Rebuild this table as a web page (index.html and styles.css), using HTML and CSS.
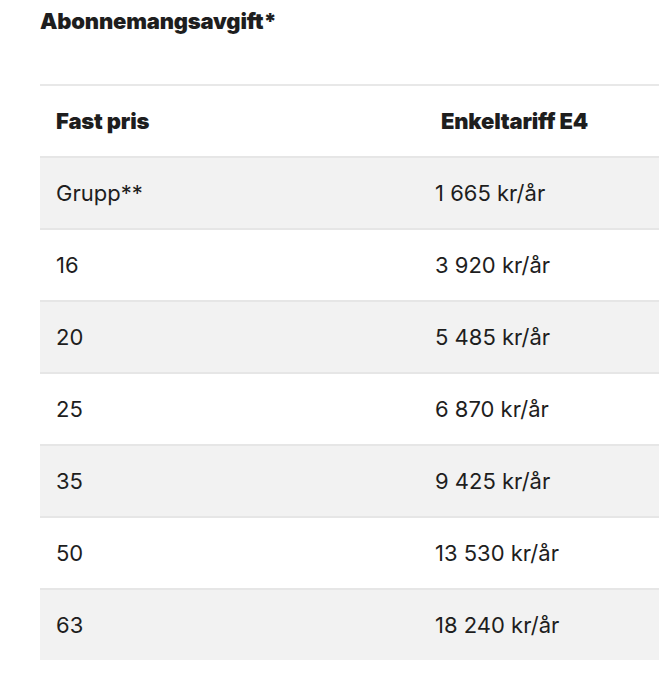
FILE: index.html
```html
<!DOCTYPE html>
<html lang="sv">
<head>
<meta charset="utf-8">
<link rel="stylesheet" href="styles.css">
</head>
<body>
<div class="wrap">
  <h2 class="title">Abonnemangsavgift*</h2>
  <table class="tariff">
    <thead>
      <tr><th class="c1">Fast pris</th><th class="c2">Enkeltariff E4</th></tr>
    </thead>
    <tbody>
      <tr class="alt"><td class="c1">Grupp**</td><td class="c2">1 665 kr/år</td></tr>
      <tr><td class="c1">16</td><td class="c2">3 920 kr/år</td></tr>
      <tr class="alt"><td class="c1">20</td><td class="c2">5 485 kr/år</td></tr>
      <tr><td class="c1">25</td><td class="c2">6 870 kr/år</td></tr>
      <tr class="alt"><td class="c1">35</td><td class="c2">9 425 kr/år</td></tr>
      <tr><td class="c1">50</td><td class="c2">13 530 kr/år</td></tr>
      <tr class="alt"><td class="c1">63</td><td class="c2">18 240 kr/år</td></tr>
    </tbody>
  </table>
</div>
</body>
</html>
```
FILE: styles.css
```css
html, body {
  margin: 0;
  padding: 0;
  background: #fff;
}
body {
  font-family: Inter, "Liberation Sans", sans-serif;
  color: #1e1e1e;
}
.wrap {
  padding: 0 0 0 40px;
}
.title {
  margin: 0;
  padding-top: 8px;
  font-size: 22px;
  line-height: 26px;
  font-weight: 900;
  letter-spacing: -0.2px;
  height: 76px;
}
.tariff {
  width: 100%;
  border-collapse: collapse;
  border-top: 2px solid #e8e8e8;
}
.tariff th, .tariff td {
  height: 70px;
  padding: 0;
  text-align: left;
  vertical-align: middle;
  border-bottom: 2px solid #e6e6e6;
}
.tariff th {
  font-size: 22px;
  font-weight: 900;
  letter-spacing: -0.2px;
}
.tariff td {
  font-size: 22px;
  font-weight: 400;
}
.tariff .c1 {
  width: 363px;
  padding-left: 16px;
}
.tariff th.c2 {
  padding-left: 22px;
}
.tariff td.c2 {
  padding-left: 16px;
}
.tariff tr.alt td {
  background: #f2f2f2;
}
.tariff tbody tr:last-child td {
  border-bottom: none;
}
```
